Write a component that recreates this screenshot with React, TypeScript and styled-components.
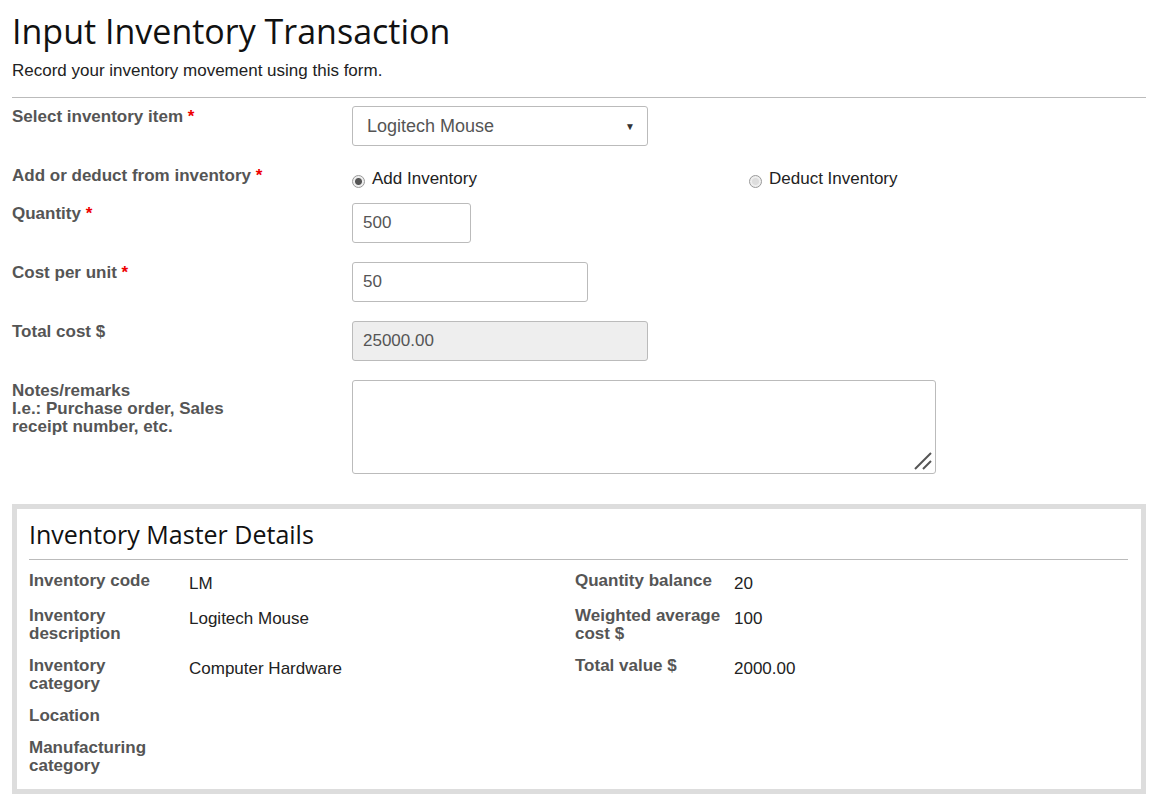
import styled, { createGlobalStyle } from "styled-components";

const Global = createGlobalStyle`
  body { margin: 0; font-family: "Liberation Sans", Arial, sans-serif; color: #222; background: #fff; }
`;

const Page = styled.div`
  padding: 10px 12px 0 12px;
  width: 1134px;
`;

const Title = styled.h1`
  margin: 0;
  font-family: "Open Sans", "Liberation Sans", sans-serif;
  font-weight: 400;
  font-size: 34px;
  line-height: 42px;
  color: #111;
`;

const Sub = styled.p`
  margin: 9px 0 16px;
  font-size: 17px;
  color: #222;
`;

const Hr = styled.div`
  border-top: 1px solid #bbb;
`;

const Form = styled.div`
  display: grid;
  grid-template-columns: 340px 1fr;
  padding-top: 8px;
`;

const Label = styled.div<{ $h: number }>`
  height: ${(p) => p.$h}px;
  padding-top: 2px;
  font-weight: bold;
  font-size: 17px;
  line-height: 18px;
  color: #555;
`;

const Req = styled.span`
  color: #e00;
`;

const Field = styled.div<{ $h: number }>`
  height: ${(p) => p.$h}px;
`;

const Input = styled.div<{ $w: number; $grey?: boolean }>`
  box-sizing: border-box;
  width: ${(p) => p.$w}px;
  height: 40px;
  border: 1px solid #bbb;
  border-radius: 3px;
  padding: 0 10px;
  display: flex;
  align-items: center;
  font-size: 17px;
  color: #555;
  background: ${(p) => (p.$grey ? "#eee" : "#fff")};
`;

const Select = styled(Input)`
  justify-content: space-between;
  padding: 0 12px 0 14px;
  font-size: 18px;
  & > span:last-child { font-size: 10px; color: #333; }
`;

const Radios = styled.div`
  display: flex;
  padding-top: 4px;
  font-size: 17px;
  color: #222;
`;

const RadioItem = styled.label`
  width: 397px;
  display: flex;
  align-items: center;
  gap: 7px;
`;

const Dot = styled.span<{ $on?: boolean }>`
  width: 13px;
  height: 13px;
  margin-top: 4px;
  border-radius: 50%;
  border: 1px solid #999;
  background: radial-gradient(circle, ${(p) => (p.$on ? "#555 0 3px" : "#ddd 0 3px")}, #eee 4px);
  box-sizing: border-box;
`;

const Textarea = styled.div`
  position: relative;
  box-sizing: border-box;
  width: 584px;
  height: 94px;
  border: 1px solid #bbb;
  border-radius: 3px;
`;

const Grip = styled.svg`
  position: absolute;
  right: 2px;
  bottom: 2px;
`;

const Panel = styled.div`
  margin-top: 28px;
  border: 5px solid #ddd;
  padding: 8px 13px 14px 12px;
`;

const PanelTitle = styled.h2`
  margin: 0;
  font-family: "Open Sans", "Liberation Sans", sans-serif;
  font-weight: 400;
  font-size: 25px;
  line-height: 34px;
  padding-bottom: 8px;
  border-bottom: 1px solid #bbb;
  color: #111;
`;

const Cols = styled.div`
  display: grid;
  grid-template-columns: 546px 1fr;
  padding-top: 12px;
`;

const DL = styled.div<{ $lw: number }>`
  display: grid;
  grid-template-columns: ${(p) => p.$lw}px 1fr;
  row-gap: 14px;
  align-content: start;
`;

const DT = styled.div`
  font-weight: bold;
  font-size: 17px;
  line-height: 18px;
  color: #555;
`;

const DD = styled.div`
  font-size: 17px;
  line-height: 18px;
  padding-top: 3px;
  color: #222;
`;

const left: [string, string][] = [
  ["Inventory code", "LM"],
  ["Inventory\ndescription", "Logitech Mouse"],
  ["Inventory\ncategory", "Computer Hardware"],
  ["Location", ""],
  ["Manufacturing\ncategory", ""],
];

const right: [string, string][] = [
  ["Quantity balance", "20"],
  ["Weighted average\ncost $", "100"],
  ["Total value $", "2000.00"],
];

const Lines = ({ t }: { t: string }) => (
  <>
    {t.split("\n").map((l, i) => (
      <div key={i}>{l}</div>
    ))}
  </>
);

export default function App() {
  return (
    <Page>
      <Global />
      <Title>Input Inventory Transaction</Title>
      <Sub>Record your inventory movement using this form.</Sub>
      <Hr />
      <Form>
        <Label $h={57}>Select inventory item <Req>*</Req></Label>
        <Field $h={57}>
          <Select $w={296}><span>Logitech Mouse</span><span>▼</span></Select>
        </Field>
        <Label $h={36}>Add or deduct from inventory <Req>*</Req></Label>
        <Field $h={36}>
          <Radios>
            <RadioItem><Dot $on />Add Inventory</RadioItem>
            <RadioItem><Dot />Deduct Inventory</RadioItem>
          </Radios>
        </Field>
        <Label $h={57}>Quantity <Req>*</Req></Label>
        <Field $h={57}><Input $w={119}>500</Input></Field>
        <Label $h={57}>Cost per unit <Req>*</Req></Label>
        <Field $h={57}><Input $w={236}>50</Input></Field>
        <Label $h={57}>Total cost $</Label>
        <Field $h={57}><Input $w={296} $grey>25000.00</Input></Field>
        <Label $h={94}>
          Notes/remarks<br />I.e.: Purchase order, Sales<br />receipt number, etc.
        </Label>
        <Field $h={94}>
          <Textarea>
            <Grip width="22" height="22" viewBox="0 0 22 22">
              <path d="M20 4 L4 20 M20 12 L12 20" stroke="#555" strokeWidth="2" />
            </Grip>
          </Textarea>
        </Field>
      </Form>
      <Panel>
        <PanelTitle>Inventory Master Details</PanelTitle>
        <Cols>
          <DL $lw={160}>
            {left.map(([k, v]) => (
              <>
                <DT key={k}><Lines t={k} /></DT>
                <DD>{v}</DD>
              </>
            ))}
          </DL>
          <DL $lw={159}>
            {right.map(([k, v]) => (
              <>
                <DT key={k}><Lines t={k} /></DT>
                <DD>{v}</DD>
              </>
            ))}
          </DL>
        </Cols>
      </Panel>
    </Page>
  );
}
